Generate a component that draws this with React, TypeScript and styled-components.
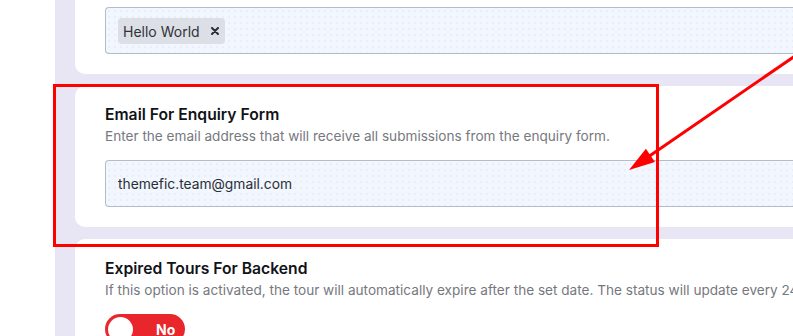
import React from "react";
import styled, { createGlobalStyle } from "styled-components";

const Global = createGlobalStyle`
  html, body { margin: 0; padding: 0; background: #ffffff; }
  body { font-family: Inter, "Noto Sans", sans-serif; overflow: hidden; }
  * { box-sizing: border-box; }
`;

const Page = styled.div`
  position: relative;
  width: 793px;
  height: 336px;
  overflow: hidden;
  display: flex;
  background: #ffffff;
`;

const Gutter = styled.div`
  width: 55px;
  flex: none;
`;

const Main = styled.main`
  flex: 1;
  background-color: #e8e5f5;
  padding-left: 20px;
  display: flex;
  flex-direction: column;
  gap: 12px;
`;

const Card = styled.section<{ $clipTop?: boolean; $pt?: number }>`
  background: #ffffff;
  border-radius: ${(p) => (p.$clipTop ? "0 0 0 10px" : "10px 0 0 10px")};
  padding: ${(p) => p.$pt ?? 19}px 30px 20px 30px;
  display: flex;
  flex-direction: column;
  margin-right: -20px;
`;

const Title = styled.h3`
  margin: 0;
  font-size: 15.7px;
  line-height: 20px;
  font-weight: 600;
  color: #111318;
`;

const Desc = styled.p`
  margin: 1px 0 0;
  font-size: 13.6px;
  line-height: 20px;
  color: #76787e;
  white-space: nowrap;
`;

const Field = styled.div<{ $mt?: number }>`
  margin-top: ${(p) => p.$mt ?? 0}px;
  height: 47px;
  border: 1px solid #b3bccb;
  border-right: none;
  border-radius: 4px 0 0 4px;
  background-color: #f2f6fe;
  background-image: radial-gradient(circle, #dfe4ee 0.6px, transparent 0.8px);
  background-size: 6px 6px;
  display: flex;
  align-items: center;
  padding: 1px 12px 0;
  font-size: 13.8px;
  color: #2b2e35;
`;

const Tag = styled.span`
  display: inline-flex;
  align-items: center;
  gap: 11px;
  height: 26px;
  padding: 0 6px 0 5px;
  border-radius: 4px;
  background: #dcdfe5;
  font-size: 14px;
  color: #2f333a;
`;

const TagClose = styled.svg`
  flex: none;
  display: block;
`;

const Toggle = styled.div`
  margin-top: 14px;
  width: 80px;
  height: 30px;
  border-radius: 15px;
  background: #e8262c;
  display: flex;
  align-items: center;
  padding: 0 3px;
  gap: 23px;
`;

const Knob = styled.span`
  width: 25px;
  height: 25px;
  border-radius: 50%;
  background: #ffffff;
  flex: none;
`;

const ToggleLabel = styled.span`
  color: #ffffff;
  font-size: 14px;
  font-weight: 700;
`;

const Overlay = styled.svg`
  position: absolute;
  left: 0;
  top: 0;
  pointer-events: none;
`;

export default function App() {
  // arrow geometry
  const x1 = 795, y1 = 56, tx = 629, ty = 170;
  const dx = tx - x1, dy = ty - y1;
  const len = Math.hypot(dx, dy);
  const ux = dx / len, uy = dy / len;
  const headLen = 26, headW = 8;
  const bx = tx - ux * headLen, by = ty - uy * headLen;
  const px = -uy, py = ux;
  const head = `${tx},${ty} ${bx + px * headW},${by + py * headW} ${bx - px * headW},${by - py * headW}`;

  return (
    <>
      <Global />
      <Page>
        <Gutter />
        <Main>
          <Card $clipTop $pt={7}>
            <Field>
              <Tag>
                Hello World
                <TagClose width={8} height={8} viewBox="0 0 8 8">
                  <path d="M1 1 L7 7 M7 1 L1 7" stroke="#2a2d33" strokeWidth={2} strokeLinecap="round" />
                </TagClose>
              </Tag>
            </Field>
          </Card>
          <Card>
            <Title>Email For Enquiry Form</Title>
            <Desc>Enter the email address that will receive all submissions from the enquiry form.</Desc>
            <Field $mt={14}>themefic.team@gmail.com</Field>
          </Card>
          <Card $pt={20}>
            <Title>Expired Tours For Backend</Title>
            <Desc>If this option is activated, the tour will automatically expire after the set date. The status will update every 24 hours.</Desc>
            <Toggle>
              <Knob />
              <ToggleLabel>No</ToggleLabel>
            </Toggle>
          </Card>
        </Main>
        <Overlay width={793} height={336} viewBox="0 0 793 336">
          <rect x={54.5} y={85.5} width={603} height={160} fill="none" stroke="#ff0000" strokeWidth={3} />
          <line x1={x1} y1={y1} x2={bx + ux * 2} y2={by + uy * 2} stroke="#ff0000" strokeWidth={3} />
          <polygon points={head} fill="#ff0000" />
        </Overlay>
      </Page>
    </>
  );
}
